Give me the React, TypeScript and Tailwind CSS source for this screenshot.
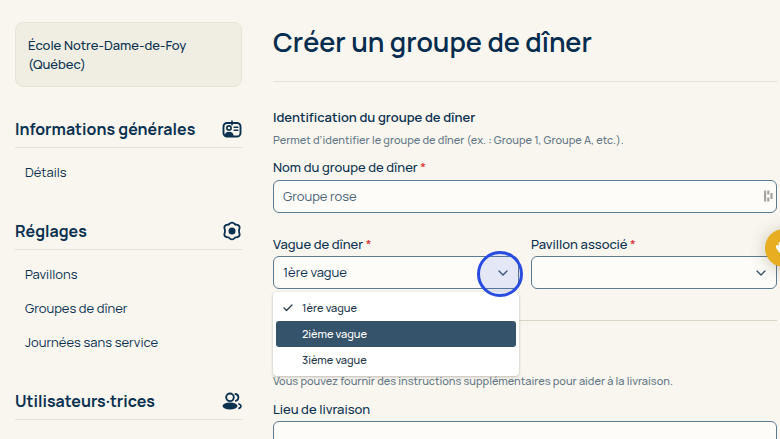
import { useState } from 'react'
import type { ReactNode } from 'react'
import { Check } from 'lucide-react'

function BadgeIcon() {
  return (
    <svg viewBox="0 0 20 18" className="h-[18px] w-5" fill="none" aria-hidden="true">
      <rect x="1.5" y="3" width="17" height="13.500" rx="3.500" stroke="currentColor" strokeWidth="1.900" />
      <path d="M10 1v3.800M12.200 7.300h3.600M12.200 10.300h3.600" stroke="currentColor" strokeWidth="1.600" strokeLinecap="round" />
      <circle cx="7" cy="7.900" r="2.100" stroke="currentColor" strokeWidth="1.700" />
      <path d="M2.600 16c0-2.800 1.900-4.300 4.500-4.300s4.500 1.500 4.500 4.300z" fill="currentColor" />
    </svg>
  )
}

function SettingsIcon() {
  return (
    <svg viewBox="0 0 20 20" className="h-5 w-5" fill="none" aria-hidden="true">
      <path
        d="M8 2.400Q10 .8 12 2.400C13 3.700 14 4 15.400 3.900Q17.900 4.600 17.600 7.200C16.800 9 16.800 11 17.600 12.800Q17.900 15.400 15.400 16.100C14 16 13 16.300 12 17.600Q10 19.200 8 17.600C7 16.300 6 16 4.600 16.100Q2.100 15.400 2.400 12.800C3.200 11 3.200 9 2.400 7.200Q2.100 4.600 4.600 3.900C6 4 7 3.700 8 2.400Z"
        stroke="currentColor"
        strokeWidth="1.8"
        strokeLinejoin="round"
      />
      <circle cx="10" cy="10" r="3.500" fill="currentColor" />
    </svg>
  )
}

function UsersIcon() {
  return (
    <svg viewBox="0 0 20 18" className="h-[18px] w-5" fill="none" aria-hidden="true">
      <circle cx="8" cy="5.300" r="3.800" stroke="currentColor" strokeWidth="1.900" />
      <path d="M13.500 2c3.600.4 4 5.600.3 6.800" stroke="currentColor" strokeWidth="1.800" strokeLinecap="round" />
      <ellipse cx="8" cy="14" rx="7.500" ry="3.500" fill="currentColor" />
      <path d="M17 12c2.600.9 2.500 3.400 0 4.300" stroke="currentColor" strokeWidth="1.800" strokeLinecap="round" />
    </svg>
  )
}

function PasswordManagerIcon() {
  return (
    <svg viewBox="0 0 9 12" className="h-3 w-[9px]" fill="#a3a3a0" aria-hidden="true">
      <rect x="0" y="0.500" width="2.200" height="11" rx=".5" />
      <rect x="3.200" y="0.500" width="2.200" height="4" rx=".5" />
      <rect x="3.200" y="7.500" width="2.200" height="4" rx=".5" />
      <rect x="6.400" y="3" width="2.200" height="6" rx=".5" />
    </svg>
  )
}

function Chevron() {
  return (
    <svg
      viewBox="0 0 10 6"
      className="pointer-events-none absolute top-[14px] right-[11px] h-[6px] w-[10px]"
      fill="none"
      aria-hidden="true"
    >
      <path d="M1 1l4 4 4-4" stroke="#3b566c" strokeWidth="1.400" strokeLinecap="round" strokeLinejoin="round" />
    </svg>
  )
}

const sections = [
  { title: 'Informations générales', icon: <BadgeIcon />, links: ['Détails'] },
  { title: 'Réglages', icon: <SettingsIcon />, links: ['Pavillons', 'Groupes de dîner', 'Journées sans service'] },
  { title: 'Utilisateurs·trices', icon: <UsersIcon />, links: [] },
]

const waves = ['1ère vague', '2ième vague', '3ième vague']

const control =
  'block w-full appearance-none rounded-md border border-[#5b7a94] bg-[#fdfcf8] px-[9px] text-[13px] outline-none'

function Label({ htmlFor, required, children }: { htmlFor: string; required?: boolean; children: ReactNode }) {
  return (
    <label htmlFor={htmlFor} className="block text-[13px] leading-5 font-medium">
      {children}
      {required && <span className="text-[#dc3535]"> *</span>}
    </label>
  )
}

export default function App() {
  const [wave, setWave] = useState(waves[0])

  return (
    <div className="h-screen overflow-hidden bg-[#f9f6ef] font-['Manrope','Inter',sans-serif] text-[#0a3150]">
      <div className="flex gap-[31px] pr-[3px] pl-[15px]">
        <aside className="w-[227px] shrink-0 pt-[22px]">
          <div className="rounded-lg border border-[#e7e4d7] bg-[#f0eee2] px-3 pt-[13px] pb-3 text-[13px] leading-[19px] font-medium">
            École Notre-Dame-de-Foy
            <br />
            (Québec)
          </div>
          <nav className="mt-[30px] flex flex-col gap-[30px]">
            {sections.map((section) => (
              <section key={section.title}>
                <h2 className="flex items-center justify-between border-b border-[#e4e1d9] pb-[6px] text-base leading-6 font-bold">
                  {section.title}
                  {section.icon}
                </h2>
                {section.links.length > 0 && (
                  <ul className="pt-[7px] pl-[10px]">
                    {section.links.map((link) => (
                      <li key={link} className="text-[13px] leading-[34px]">
                        <a href="#">{link}</a>
                      </li>
                    ))}
                  </ul>
                )}
              </section>
            ))}
          </nav>
        </aside>

        <main className="min-w-0 flex-1 pt-[22px]">
          <h1 className="border-b border-[#e4e1d9] pb-5 text-[27px] leading-[39px] font-semibold text-[#032c4e]">
            Créer un groupe de dîner
          </h1>
          <form>
            <h2 className="mt-[25px] text-[13px] leading-5 font-semibold">Identification du groupe de dîner</h2>
            <p className="mt-[3px] text-[11px] leading-5 font-medium text-[#647887]">
              Permet d’identifier le groupe de dîner (ex. : Groupe 1, Groupe A, etc.).
            </p>
            <div className="mt-[7px]">
              <Label htmlFor="name" required>
                Nom du groupe de dîner
              </Label>
              <div className="relative mt-[3px]">
                <input
                  id="name"
                  type="text"
                  defaultValue="Groupe rose"
                  className={`${control} h-[33px] pb-[2px] text-[#4b6376]`}
                />
                <span className="absolute top-[10px] right-1">
                  <PasswordManagerIcon />
                </span>
              </div>
            </div>

            <div className="mt-[21px] grid grid-cols-2 gap-3">
              <div>
                <Label htmlFor="wave" required>
                  Vague de dîner
                </Label>
                <div className="relative mt-[2px]">
                  <select
                    id="wave"
                    value={wave}
                    onChange={(e) => setWave(e.target.value)}
                    className={`${control} h-[33px]`}
                  >
                    {waves.map((w) => (
                      <option key={w}>{w}</option>
                    ))}
                  </select>
                  <Chevron />
                  <div
                    role="listbox"
                    aria-label="Vague de dîner"
                    className="absolute top-full left-0 z-10 mt-[3px] w-full rounded bg-white p-[3px] text-[11px] text-[#24384a] shadow-[0_1px_3px_rgba(0,0,0,0.25)]"
                  >
                    {waves.map((w, i) => (
                      <button
                        key={w}
                        type="button"
                        role="option"
                        aria-selected={w === wave}
                        onClick={() => setWave(w)}
                        className={`flex h-[26px] w-full items-center rounded-[3px] pl-[6px] font-medium ${i === 1 ? 'bg-[#35536a] text-white' : ''}`}
                      >
                        <span className="w-5">{w === wave && <Check className="h-3 w-3" strokeWidth={2.5} />}</span>
                        {w}
                      </button>
                    ))}
                  </div>
                  <span className="pointer-events-none absolute -top-[5px] -right-[4px] z-20 h-[46px] w-[46px] rounded-full border-3 border-[#284be0] bg-[#3552e6]/12" />
                </div>
              </div>
              <div>
                <Label htmlFor="pavilion" required>
                  Pavillon associé
                </Label>
                <div className="relative mt-[2px]">
                  <select id="pavilion" defaultValue="" className={`${control} h-[33px]`}>
                    <option value="" />
                  </select>
                  <Chevron />
                </div>
              </div>
            </div>

            <hr className="mt-[31px] border-[#d8d5c6]" />
            <p className="mt-[50px] text-[11px] leading-5 font-medium text-[#647887]">
              Vous pouvez fournir des instructions supplémentaires pour aider à la livraison.
            </p>
            <div className="mt-2">
              <Label htmlFor="place">Lieu de livraison</Label>
              <textarea id="place" rows={3} className={`${control} mt-[2px] resize-none`} />
            </div>
          </form>
        </main>
      </div>

      <button
        type="button"
        aria-label="Aide"
        className="fixed top-[229px] -right-[23px] flex h-[38px] w-[38px] items-center justify-center rounded-full bg-[#e6ae20] text-white shadow-[0_2px_16px_rgba(80,70,40,0.3)]"
      >
        <svg viewBox="0 0 18 18" className="h-[18px] w-[18px]" fill="currentColor" aria-hidden="true">
          <path d="M1 7.500c.2-1.500 1.700-1.800 2.300-.8L4 7.600 3.500 4.500c.2-1.500 1.800-1.500 2.200-.2L6.500 7V3c.5-1.200 2-1.200 2.200 0v4l2.300-2.500c1.200-.8 2.400.4 1.700 1.600L12 12c-2 4-6.500 3.500-8.500.5L1.600 9.800C1.100 9 .9 8.300 1 7.500z" />
        </svg>
      </button>
    </div>
  )
}
